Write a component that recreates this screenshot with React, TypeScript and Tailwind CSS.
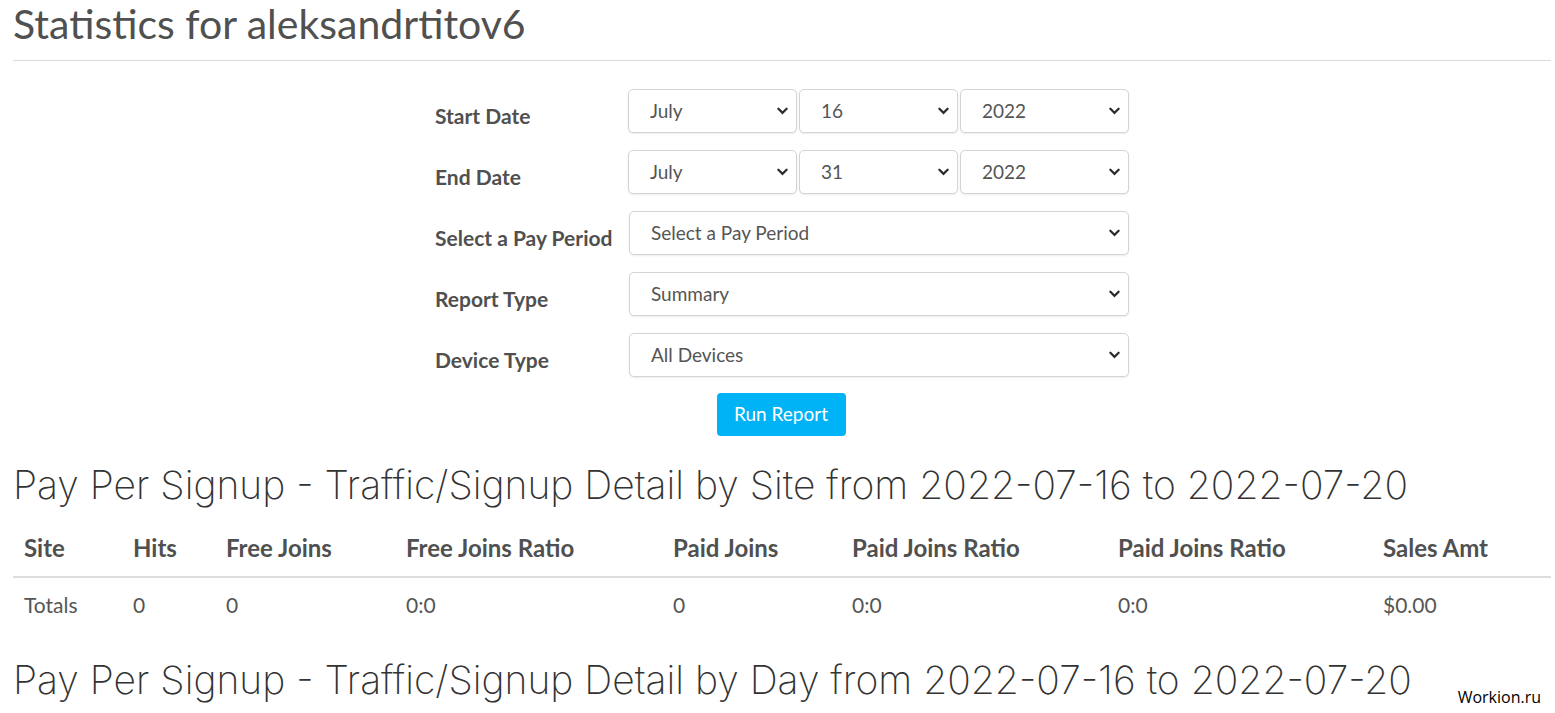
import React from "react";

type Row = { label: string; fields: { value: string; width: string }[] };

const rows: Row[] = [
  {
    label: "Start Date",
    fields: [
      { value: "July", width: "w-[169px]" },
      { value: "16", width: "w-[159px]" },
      { value: "2022", width: "w-[169px]" },
    ],
  },
  {
    label: "End Date",
    fields: [
      { value: "July", width: "w-[169px]" },
      { value: "31", width: "w-[159px]" },
      { value: "2022", width: "w-[169px]" },
    ],
  },
  { label: "Select a Pay Period", fields: [{ value: "Select a Pay Period", width: "w-[500px]" }] },
  { label: "Report Type", fields: [{ value: "Summary", width: "w-[500px]" }] },
  { label: "Device Type", fields: [{ value: "All Devices", width: "w-[500px]" }] },
];

const columns = [
  { name: "Site", width: "w-[109px]", value: "Totals" },
  { name: "Hits", width: "w-[93px]", value: "0" },
  { name: "Free Joins", width: "w-[180px]", value: "0" },
  { name: "Free Joins Ratio", width: "w-[267px]", value: "0:0" },
  { name: "Paid Joins", width: "w-[179px]", value: "0" },
  { name: "Paid Joins Ratio", width: "w-[266px]", value: "0:0" },
  { name: "Paid Joins Ratio", width: "w-[265px]", value: "0:0" },
  { name: "Sales Amt", width: "w-[179px]", value: "$0.00" },
];

function Chevron() {
  return (
    <svg
      viewBox="0 0 12 8"
      className="pointer-events-none absolute right-[9px] top-1/2 h-[8px] w-[11px] -translate-y-1/2"
    >
      <path d="M1.5 1.5 6 6l4.5-4.5" fill="none" stroke="#2b2b2b" strokeWidth="2.4" strokeLinecap="round" />
    </svg>
  );
}

function Select({ value, width }: { value: string; width: string }) {
  return (
    <div className={`relative ${width}`}>
      <select
        defaultValue={value}
        className="h-[44px] w-full appearance-none rounded-[5px] border border-[#d4d4d4] bg-white pl-[21px] text-[19px] text-[#555] shadow-[0_1px_2px_rgba(0,0,0,0.08)] outline-none"
      >
        <option>{value}</option>
      </select>
      <Chevron />
    </div>
  );
}

export default function App() {
  return (
    <div className="relative min-h-[713px] bg-white px-[13px] pr-[4px] font-['Lato',sans-serif] text-[#555]">
      <h1 className="h-[48px] pt-[1px] text-[41px] leading-[46px] text-[#505050]">Statistics for aleksandrtitov6</h1>
      <div className="mt-[12px] h-px bg-[#d9d9d9]" />

      <form className="mx-auto mt-[28px] w-[694px]" onSubmit={(e) => e.preventDefault()}>
        {rows.map((row) => (
          <div key={row.label} className="mb-[17px] flex items-center">
            <label className="w-[194px] pt-[9px] text-[21px] font-bold leading-[24px] text-[#505050]">
              {row.label}
            </label>
            <div className="flex gap-[2px]">
              {row.fields.map((f, i) => (
                <Select key={i} value={f.value} width={f.width} />
              ))}
            </div>
          </div>
        ))}
        <div className="flex justify-center pr-[2px]">
          <button
            type="submit"
            className="-mt-[1px] h-[43px] w-[129px] rounded-[4px] bg-[#00b2f6] text-[19px] text-white"
          >
            Run Report
          </button>
        </div>
      </form>

      <h2 className="mt-[26px] font-['Inter',sans-serif] text-[39px] font-extralight leading-[46px] text-[#333]">
        Pay Per Signup - Traffic/Signup Detail by Site from 2022-07-16 to 2022-07-20
      </h2>

      <table className="mt-[15px] w-full table-fixed border-collapse">
        <thead>
          <tr className="border-b-2 border-[#ddd]">
            {columns.map((c, i) => (
              <th
                key={i}
                className={`${c.width} h-[54px] px-[11px] pb-[4px] text-left text-[24px] font-bold leading-[28px] text-[#505050]`}
              >
                {c.name}
              </th>
            ))}
          </tr>
        </thead>
        <tbody>
          <tr>
            {columns.map((c, i) => (
              <td key={i} className="h-[54px] px-[11px] text-[21px] text-[#555]">
                {c.value}
              </td>
            ))}
          </tr>
        </tbody>
      </table>

      <h2 className="mt-[26px] font-['Inter',sans-serif] text-[39px] font-extralight leading-[46px] text-[#333]">
        Pay Per Signup - Traffic/Signup Detail by Day from 2022-07-16 to 2022-07-20
      </h2>

      <span className="absolute bottom-[4px] right-[10px] bg-white px-[4px] font-['Open_Sans',sans-serif] text-[16px] text-black">
        Workion.ru
      </span>
    </div>
  );
}
